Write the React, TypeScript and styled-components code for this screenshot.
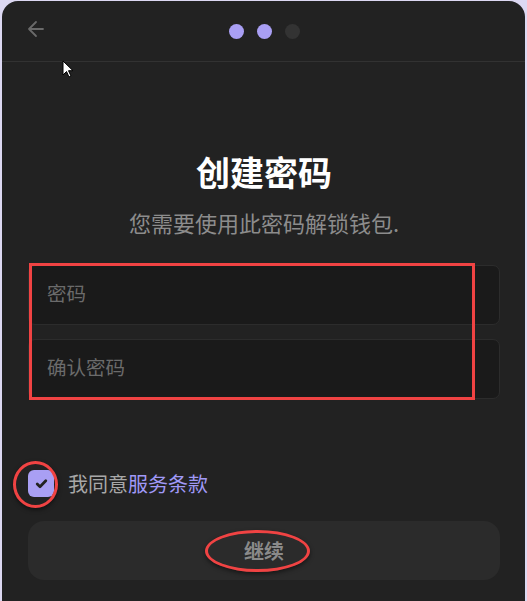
import styled, { createGlobalStyle } from "styled-components";

const Global = createGlobalStyle`
  html, body {
    margin: 0;
    padding: 0;
    background: #dcd8f2;
    overflow: hidden;
  }
  body {
    font-family: "Noto Sans CJK SC", "Noto Sans", sans-serif;
  }
`;

const Card = styled.div`
  position: relative;
  margin: 1px 2px 0 2px;
  height: 620px;
  background: #222222;
  border-radius: 16px;
  display: flex;
  flex-direction: column;
`;

const Header = styled.div`
  height: 60px;
  border-bottom: 1px solid #323232;
  display: flex;
  align-items: center;
  justify-content: center;
  position: relative;
`;

const BackButton = styled.button`
  position: absolute;
  left: 19px;
  top: 13px;
  width: 30px;
  height: 30px;
  padding: 0;
  border: none;
  background: transparent;
  display: flex;
  align-items: center;
  justify-content: center;
  color: #6a6a6a;
`;

const Dots = styled.div`
  display: flex;
  gap: 13px;
  margin-left: 1px;
  margin-top: 1px;
`;

const Dot = styled.span<{ $on: boolean }>`
  width: 15px;
  height: 15px;
  border-radius: 50%;
  background: ${(p) => (p.$on ? "#a99ff4" : "#333333")};
`;

const Body = styled.div`
  padding: 90px 25px 0 26px;
  display: flex;
  flex-direction: column;
`;

const Title = styled.h1`
  margin: 0;
  text-align: center;
  font-size: 34px;
  line-height: 40px;
  font-weight: 700;
  color: #ffffff;
`;

const Subtitle = styled.p`
  margin: 16px 0 0 0;
  text-align: center;
  font-size: 22px;
  line-height: 28px;
  color: #8c8c8c;
`;

const Fields = styled.div`
  margin-top: 29px;
  display: flex;
  flex-direction: column;
  gap: 14px;
`;

const Input = styled.input`
  box-sizing: border-box;
  height: 60px;
  width: 100%;
  padding: 0 18px 6px 18px;
  border: 1px solid #2c2c2c;
  border-radius: 7px;
  background: #1a1a1a;
  color: #ddd;
  font-family: inherit;
  font-size: 19.5px;
  outline: none;
  &::placeholder {
    color: #6b6b6b;
  }
`;

const AgreeRow = styled.label`
  margin-top: 71px;
  display: flex;
  align-items: center;
  gap: 14px;
  font-size: 20px;
  line-height: 27px;
  color: #a8a8a8;
`;

const Check = styled.span`
  width: 26px;
  height: 27px;
  border-radius: 6px;
  background: #a99ff4;
  display: flex;
  align-items: center;
  justify-content: center;
`;

const Terms = styled.span`
  color: #a099f7;
`;

const Continue = styled.button`
  margin-top: 24px;
  height: 59px;
  border: none;
  border-radius: 16px;
  background: #2b2b2b;
  color: #8a8a8a;
  font-family: inherit;
  font-size: 20px;
  font-weight: 700;
`;

/* review annotations drawn over the screenshot */
const Mark = styled.div<{ $round?: boolean }>`
  position: absolute;
  box-sizing: border-box;
  border: 3px solid #f04343;
  border-radius: ${(p) => (p.$round ? "50%" : "0")};
  box-shadow: ${(p) => (p.$round ? "0 2px 4px rgba(0,0,0,0.5)" : "none")};
  pointer-events: none;
`;

const Cursor = styled.svg`
  position: absolute;
  left: 60px;
  top: 59px;
`;

export default function App() {
  return (
    <>
      <Global />
      <Card>
        <Header>
          <BackButton aria-label="back">
            <svg width="20" height="20" viewBox="0 0 20 20" fill="none" stroke="currentColor" strokeWidth="1.8" strokeLinecap="round" strokeLinejoin="round">
              <path d="M17 10H3M10 3l-7 7 7 7" />
            </svg>
          </BackButton>
          <Dots>
            <Dot $on />
            <Dot $on />
            <Dot $on={false} />
          </Dots>
        </Header>
        <Body>
          <Title>创建密码</Title>
          <Subtitle>您需要使用此密码解锁钱包.</Subtitle>
          <Fields>
            <Input type="password" placeholder="密码" />
            <Input type="password" placeholder="确认密码" />
          </Fields>
          <AgreeRow>
            <Check>
              <svg width="15" height="15" viewBox="0 0 14 14" fill="none" stroke="#222" strokeWidth="2.6" strokeLinecap="round" strokeLinejoin="round">
                <path d="M3 7.5l2.6 2.6L11 4.5" />
              </svg>
            </Check>
            <span>
              我同意<Terms>服务条款</Terms>
            </span>
          </AgreeRow>
          <Continue>继续</Continue>
        </Body>

        <Mark style={{ left: 27, top: 262, width: 446, height: 137 }} />
        <Mark $round style={{ left: 11, top: 460, width: 45, height: 47 }} />
        <Mark $round style={{ left: 203, top: 529, width: 105, height: 42 }} />

        <Cursor width="12" height="18" viewBox="0 0 12 18">
          <path d="M1 1v14l3.5-3.5 2.5 5.5 2-1-2.5-5.3H11z" fill="#fff" stroke="#000" strokeWidth="1" strokeLinejoin="round" />
        </Cursor>
      </Card>
    </>
  );
}
